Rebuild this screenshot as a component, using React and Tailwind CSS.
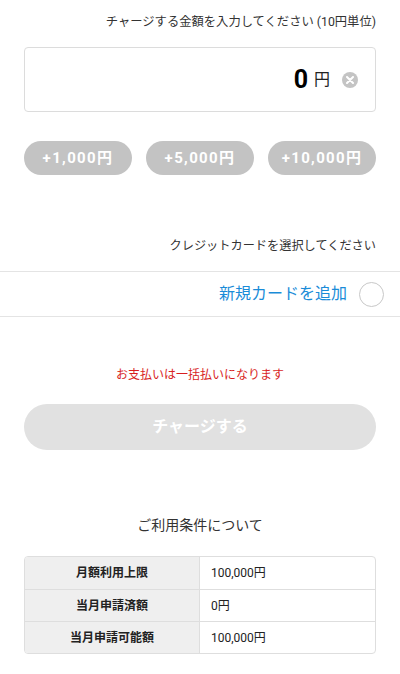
import { useState } from 'react';

const font = { fontFamily: 'Roboto, "Noto Sans CJK JP", sans-serif' };

const quickAmounts = [1000, 5000, 10000];

const terms = [
  { label: '月額利用上限', value: '100,000円' },
  { label: '当月申請済額', value: '0円' },
  { label: '当月申請可能額', value: '100,000円' },
];

export default function App() {
  const [amount, setAmount] = useState(0);
  const [selected, setSelected] = useState(false);

  return (
    <div className="min-h-screen w-[400px] bg-white text-[#333]" style={font}>
      {/* Amount */}
      <div className="px-6 pt-[14px]">
        <p className="text-right text-[12.3px] leading-4 text-[#333]">
          チャージする金額を入力してください (10円単位)
        </p>
        <div className="mt-[17px] flex h-[65px] items-center justify-end rounded border border-[#dcdcdc] pr-[17px]">
          <span className="text-[25px] font-bold leading-none text-black">{amount.toLocaleString()}</span>
          <span className="ml-[6px] text-base leading-none text-[#222]">円</span>
          <button
            onClick={() => setAmount(0)}
            className="ml-[12px] flex h-[16px] w-[16px] items-center justify-center rounded-full bg-[#c4c4c4]"
          >
            <svg width="8" height="8" viewBox="0 0 8 8">
              <path d="M1 1L7 7M7 1L1 7" stroke="white" strokeWidth="2" strokeLinecap="round" />
            </svg>
          </button>
        </div>
        <div className="mt-[29px] flex gap-[14px]">
          {quickAmounts.map((q) => (
            <button
              key={q}
              onClick={() => setAmount(amount + q)}
              className="h-[34px] flex-1 rounded-full bg-[#c3c3c3] text-[15px] font-bold tracking-[0.09em] text-white"
            >
              +{q.toLocaleString()}円
            </button>
          ))}
        </div>
        <p className="mt-[63px] text-right text-[12.2px] leading-4 text-[#333]">
          クレジットカードを選択してください
        </p>
      </div>

      {/* Card select */}
      <div
        onClick={() => setSelected(!selected)}
        className="mt-[17px] flex h-[46px] items-center justify-end border-y border-[#e4e4e4] pr-4"
      >
        <span className="text-base text-[#1a8cd8]">新規カードを追加</span>
        <span className="ml-[12px] flex h-[25px] w-[25px] items-center justify-center rounded-full border border-[#c8c8c8]">
          {selected && <span className="h-[13px] w-[13px] rounded-full bg-[#1a8cd8]" />}
        </span>
      </div>

      <div className="px-6">
        <p className="mt-[50px] text-center text-xs leading-4 text-[#d81e1e]">お支払いは一括払いになります</p>
        <button className="mt-[21px] h-[46px] w-full rounded-full bg-[#e1e1e1] text-base font-bold text-white">
          チャージする
        </button>

        <p className="mt-[65px] text-center text-sm leading-5 text-[#333]">ご利用条件について</p>

        <div className="mt-[21px] overflow-hidden rounded border border-[#dedede]">
          {terms.map((t, i) => (
            <div key={t.label} className={`flex h-[32px] ${i > 0 ? 'border-t border-[#dedede]' : ''}`}>
              <div className="flex w-[175px] items-center justify-center border-r border-[#dedede] bg-[#efefef] text-xs font-bold text-[#222]">
                {t.label}
              </div>
              <div className="flex flex-1 items-center pl-[11px] text-xs text-[#222]">{t.value}</div>
            </div>
          ))}
        </div>
      </div>
    </div>
  );
}
